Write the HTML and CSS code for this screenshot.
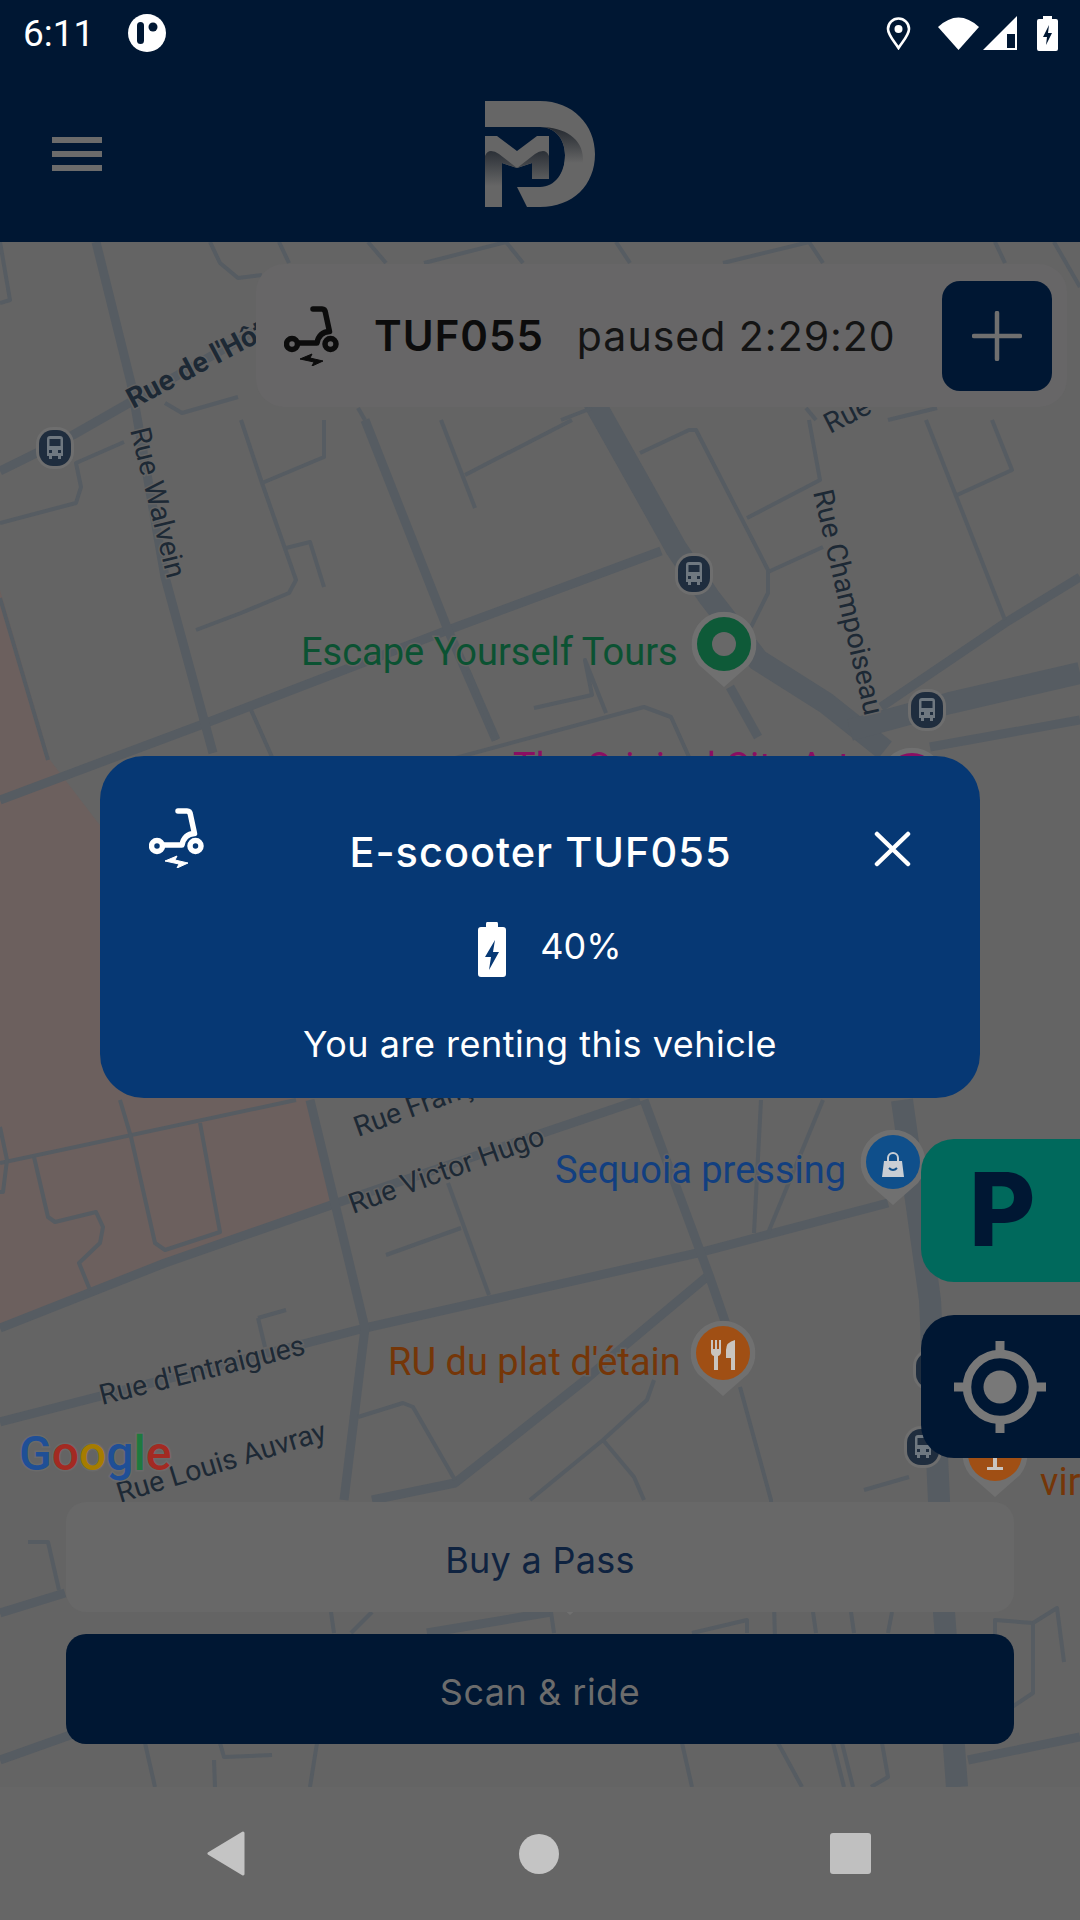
FILE: index.html

```html
<!DOCTYPE html>
<html lang="en">
<head>
  <meta charset="UTF-8" />
  <meta name="viewport" content="width=device-width, initial-scale=1.0"/>
  <title>E-scooter rental</title>
  <link rel="stylesheet" href="styles.css">
</head>
<body>
  <svg class="defs" width="0" height="0">
    <symbol id="scooter" viewBox="0 0 56 60">
      <path class="scooter-line" d="M29 3H38Q41 3 41.500 7L45.500 25.500Q35 26 33 37H14"/>
      <circle class="scooter-line" cx="8" cy="38" r="5.500"/>
      <circle class="scooter-line" cx="46.500" cy="38" r="5.500"/>
      <path class="scooter-bolt" d="M16 53L28 48L26 52L39 55L28 60L30 56Z"/>
    </symbol>
    <symbol id="bus-pin" viewBox="0 0 40 44">
      <rect x="1" y="1" width="38" height="42" rx="17" fill="#6e6e6e"/>
      <rect x="4" y="4" width="32" height="36" rx="14" fill="#1f2d3e"/>
      <path fill="#6f7880" d="M12 13q0-3 3-3h10q3 0 3 3v17h-2v3h-3v-3h-6v3h-3v-3h-2zM14.500 13v7h11v-7zM14 24v3h3v-3zM23 24v3h3v-3z"/>
    </symbol>
    <symbol id="pin-shell" viewBox="0 0 65 76">
      <path fill="#707070" d="M32.500 75.500L7.500 53.500A32.500 32.500 0 1 1 57.500 53.500Z"/>
    </symbol>
  </svg>

  <div class="screen">
    <div class="status-bar">
      <div class="status-left">
        <span class="clock">6:11</span>
        <svg class="app-dot" viewBox="0 0 38 38">
          <circle cx="19" cy="19" r="19" fill="#fff"/>
          <rect x="9" y="8" width="7" height="22" rx="3.500" fill="#001733"/>
          <circle cx="25" cy="13" r="4.500" fill="#001733"/>
        </svg>
      </div>
      <div class="status-right">
        <svg class="st-pin" viewBox="0 0 25 33">
          <path d="M12.500 31C8 24 2 18 2 12a10.500 10.500 0 0 1 21 0C23 18 17 24 12.500 31Z" fill="none" stroke="#fff" stroke-width="2.600"/>
          <circle cx="12.500" cy="12" r="4" fill="#fff"/>
        </svg>
        <svg class="st-wifi" viewBox="0 0 41 34">
          <path d="M0 11Q20.500-8 41 11L20.500 34Z" fill="#fff"/>
        </svg>
        <svg class="st-signal" viewBox="0 0 34 34">
          <path d="M0 34L34 0V34Z" fill="#fff"/>
          <path d="M24 18H32V32H24Z" fill="#001733"/>
        </svg>
        <svg class="st-battery" viewBox="0 0 21 35">
          <path fill="#fff" fill-rule="evenodd" d="M6 0h9v3h4q2 0 2 2v28q0 2-2 2H2q-2 0-2-2V5q0-2 2-2h4zM12 9l-6 12h4l-1 8 6-12h-4z"/>
        </svg>
      </div>
    </div>

    <header class="app-header">
      <button class="menu-btn"><span></span><span></span><span></span></button>
      <svg class="logo" viewBox="0 0 110 106">
        <defs>
          <linearGradient id="fold" x1="0" y1="0" x2="0" y2="1">
            <stop offset="0" stop-color="#23282f"/>
            <stop offset="0.6" stop-color="#666"/>
          </linearGradient>
          <linearGradient id="leg" x1="0" y1="0" x2="0" y2="1">
            <stop offset="0" stop-color="#2b3037"/>
            <stop offset="1" stop-color="#666"/>
          </linearGradient>
        </defs>
        <path fill="#666" d="M0 0H55C88 0 110 24 110 53C110 84 88 106 55 106H42L32 86H55C70 86 80 72 80 54C80 38 70 26 55 26H0Z"/>
        <path fill="url(#fold)" d="M55 26C80 26 98 38 98 58C98 72 84 86 62 86C74 82 80 70 80 54C80 38 70 26 55 26Z"/>
        <path fill="#666" d="M0 35H12L32 50L52 35H64V78H47V62L32 67L17 62V106H0Z"/>
        <path fill="url(#leg)" d="M0 55Q2 50 6 50Q10 50 14 53L32 67L50 53Q54 50 58 50Q62 50 64 55V78H47V62L32 67L17 62V85H0Z"/>
      </svg>
    </header>

    <main class="map">
      <svg class="map-canvas" viewBox="0 242 1080 1545">
        <path class="land-pink" d="M0 590L50 760L310 1100L337 1203L0 1328Z"/>

        <g class="road-wide">
          <path d="M590 395L676 548L709 597L758 660L826 703L885 750"/>
          <path d="M902 1100L930 1300L944 1612L957 1787"/>
          <path d="M1080 673L950 703L850 730"/>
        </g>
        <g class="road-mid">
          <path d="M0 471L73 435L257 330"/>
          <path d="M661 551L448 630L214 720L0 800"/>
          <path d="M96 242L131 383L165 577L213 753"/>
          <path d="M365 420L448 630L496 740"/>
          <path d="M730 687L758 737"/>
          <path d="M1080 577L1005 623L881 707"/>
          <path d="M1080 720L930 747"/>
          <path d="M0 1328L165 1263L337 1203L640 1100"/>
          <path d="M0 1422L365 1328L702 1252L888 1203"/>
          <path d="M310 1100L365 1328L344 1500"/>
          <path d="M0 1613L65 1593"/>
          <path d="M0 1760L76 1733"/>
          <path d="M427 1633L551 1612"/>
          <path d="M968 1760L1080 1737"/>
          <path d="M709 1275L623 1347L585 1380L455 1483L372 1500"/>
          <path d="M644 1100L709 1275L727 1327"/>
        </g>
        <g class="road-thin">
          <path d="M0 242L10 300L0 303"/>
          <path d="M210 242L220 263L238 278L262 275"/>
          <path d="M279 242L289 263"/>
          <path d="M368 242L386 263"/>
          <path d="M424 263L506 242L523 263"/>
          <path d="M616 242L630 263"/>
          <path d="M723 263L809 242L823 263"/>
          <path d="M995 242L1005 263"/>
          <path d="M1054 242L1080 287"/>
          <path d="M165 403L182 413L238 397"/>
          <path d="M561 420L592 408"/>
          <path d="M358 408L365 420"/>
          <path d="M806 408L816 420"/>
          <path d="M888 420L937 408"/>
          <path d="M241 420L262 483L296 580L289 593L241 613L196 630"/>
          <path d="M262 483L324 457L324 420"/>
          <path d="M286 548L310 542L324 587"/>
          <path d="M441 420L475 508"/>
          <path d="M572 420L465 475"/>
          <path d="M640 453L689 430L696 430L768 570L768 593L751 627"/>
          <path d="M747 518L820 480L809 420"/>
          <path d="M768 572L823 547"/>
          <path d="M926 420L1005 620"/>
          <path d="M957 495L1012 470L992 420"/>
          <path d="M0 523L76 503L81 487L76 463L124 442"/>
          <path d="M0 598L48 760"/>
          <path d="M251 710L272 757"/>
          <path d="M534 708L592 695L585 660L606 713"/>
          <path d="M448 760L644 707L671 717L689 757"/>
          <path d="M468 670L496 740"/>
          <path d="M0 1163L296 1100"/>
          <path d="M120 1100L131 1137L155 1243L165 1250L220 1232L200 1123"/>
          <path d="M34 1157L48 1217L55 1222L96 1212L103 1227L100 1243L79 1263L90 1290"/>
          <path d="M0 1127L7 1160L3 1192L0 1192"/>
          <path d="M448 1183L489 1295"/>
          <path d="M461 1228L386 1255"/>
          <path d="M761 1100L754 1233"/>
          <path d="M823 1100L768 1233"/>
          <path d="M740 1387L771 1500L778 1743L802 1787"/>
          <path d="M654 1380L647 1400L603 1440L530 1500"/>
          <path d="M603 1440L634 1477L644 1500"/>
          <path d="M358 1417L403 1403L413 1407L455 1480"/>
          <path d="M258 1318L286 1310"/>
          <path d="M258 1318L265 1347"/>
          <path d="M28 1542L48 1542L59 1590"/>
          <path d="M145 1743L155 1787"/>
          <path d="M220 1743L224 1757L272 1755"/>
          <path d="M214 1760L215 1787"/>
          <path d="M317 1743L310 1787"/>
          <path d="M331 1612L334 1633"/>
          <path d="M372 1612L351 1633"/>
          <path d="M551 1612L554 1633"/>
          <path d="M692 1633L747 1620L747 1633"/>
          <path d="M682 1743L692 1787"/>
          <path d="M833 1743L844 1787"/>
          <path d="M842 1743L853 1787"/>
          <path d="M882 1743L888 1777L871 1787"/>
          <path d="M813 1612L816 1633"/>
          <path d="M851 1612L854 1633"/>
          <path d="M892 1612L888 1633"/>
          <path d="M1012 1707L1033 1693L1033 1623L995 1620L995 1700"/>
          <path d="M1033 1623L1057 1608L1064 1662"/>
          <path d="M864 1490L909 1477"/>
        </g>

        <text class="street street-bold" transform="translate(133 409) rotate(-28)">Rue de l'Hôtel</text>
        <text class="street" transform="translate(130 430) rotate(76)">Rue Walvein</text>
        <text class="street" transform="translate(813 492) rotate(77)">Rue Champoiseau</text>
        <text class="street" transform="translate(830 434) rotate(-27)">Rue</text>
        <text class="street" transform="translate(358 1137) rotate(-20)">Rue François</text>
        <text class="street" transform="translate(353 1214) rotate(-20)">Rue Victor Hugo</text>
        <text class="street" transform="translate(102 1405) rotate(-14)">Rue d'Entraigues</text>
        <text class="street" transform="translate(120 1503) rotate(-17)">Rue Louis Auvray</text>

        <text class="google" x="19" y="1470"><tspan class="g-blue">G</tspan><tspan class="g-red">o</tspan><tspan class="g-yellow">o</tspan><tspan class="g-blue">g</tspan><tspan class="g-green">l</tspan><tspan class="g-red">e</tspan></text>

        <text class="poi poi-green" x="301" y="665">Escape Yourself Tours</text>
        <text class="poi poi-magenta" x="513" y="780">The Original City Art</text>
        <text class="poi poi-blue" x="555" y="1183">Sequoia pressing</text>
        <text class="poi poi-orange" x="388" y="1375">RU du plat d'étain</text>
        <text class="poi poi-orange" x="1040" y="1495">vir</text>

        <use href="#bus-pin" x="35" y="426" width="40" height="44"/>
        <use href="#bus-pin" x="674" y="552" width="40" height="44"/>
        <use href="#bus-pin" x="907" y="688" width="40" height="44"/>
        <use href="#bus-pin" x="903" y="1425" width="40" height="44"/>
        <use href="#bus-pin" x="912" y="1348" width="40" height="44"/>

        <use href="#pin-shell" x="691.500" y="611.500" width="65" height="76"/>
        <circle cx="724" cy="644" r="27" fill="#0e5a38"/>
        <circle cx="724" cy="644" r="12" fill="#686868"/>

        <use href="#pin-shell" x="879.500" y="747.500" width="65" height="76"/>
        <circle cx="912" cy="780" r="27" fill="#8a0e63"/>

        <use href="#pin-shell" x="860.500" y="1129.500" width="65" height="76"/>
        <circle cx="893" cy="1162" r="27" fill="#0f4f8b"/>
        <path fill="#c9ced4" fill-rule="evenodd" d="M882 1177l2-16h3v-3a6 6 0 0 1 12 0v3h3l2 16zM889 1161h8v-3a4 4 0 0 0-8 0z"/>
        <path fill="none" stroke="#0f4f8b" stroke-width="2" d="M889 1168q4 4 8 0"/>

        <use href="#pin-shell" x="690.500" y="1320.500" width="65" height="76"/>
        <circle cx="723" cy="1353" r="27" fill="#a04f14"/>
        <path fill="#c9c4bf" d="M711 1340h2v9h2v-9h2v9h2v-9h2v12q0 3-3 4v14h-4v-14q-3-1-3-4zM735 1340v30h-4v-12h-5v-8q0-8 9-10z"/>

        <use href="#pin-shell" x="962.500" y="1421.500" width="65" height="76"/>
        <circle cx="995" cy="1454" r="27" fill="#a04f14"/>
        <path fill="#c9c4bf" d="M987 1467h16v3h-16zM993 1456h4v11h-4z"/>

        <use href="#pin-shell" x="537.500" y="1539.500" width="65" height="76"/>
      </svg>

      <div class="ride-card">
        <svg class="ride-icon"><use href="#scooter"/></svg>
        <span class="ride-code">TUF055</span>
        <span class="ride-state">paused 2:29:20</span>
        <button class="extend-btn">
          <svg viewBox="0 0 50 50" width="50" height="50">
            <path d="M25 2V48M2 25H48" stroke="#6f6f6f" stroke-width="4.500" stroke-linecap="round"/>
          </svg>
        </button>
      </div>

      <div class="side-btn side-parking">P</div>
      <div class="side-btn side-locate">
        <svg viewBox="0 0 92 92" width="92" height="92">
          <circle cx="46" cy="46" r="33" fill="none" stroke="#787878" stroke-width="8.500"/>
          <circle cx="46" cy="46" r="16.500" fill="#787878"/>
          <path d="M46 0V12M46 80V92M0 46H12M80 46H92" stroke="#787878" stroke-width="9"/>
        </svg>
      </div>

      <div class="map-actions">
        <button class="action action-light">Buy a Pass</button>
        <button class="action action-dark">Scan &amp; ride</button>
      </div>

      <div class="vehicle-dialog">
        <div class="dialog-head">
          <svg class="dialog-scooter"><use href="#scooter"/></svg>
          <h2>E-scooter TUF055</h2>
          <svg class="dialog-close" viewBox="0 0 37 36">
            <path d="M3 3L34 33M34 3L3 33" stroke="#fff" stroke-width="4.500" stroke-linecap="round"/>
          </svg>
        </div>
        <div class="dialog-battery">
          <svg viewBox="0 0 28 55" width="28" height="55">
            <path fill="#fff" fill-rule="evenodd" d="M9 0h10q1 0 1 2v3h5q3 0 3 3v44q0 3-3 3H3q-3 0-3-3V8q0-3 3-3h5V2q0-2 1-2zM17 18L7 35h6l-2 13 10-18h-6z"/>
          </svg>
          <span>40%</span>
        </div>
        <p>You are renting this vehicle</p>
      </div>
    </main>

    <nav class="nav-bar">
      <svg viewBox="0 0 38 45" width="38" height="45">
        <path d="M36 2L2 22.500L36 43Z" fill="#c4c4c4" stroke="#c4c4c4" stroke-width="3" stroke-linejoin="round"/>
      </svg>
      <span class="nav-home"></span>
      <span class="nav-recent"></span>
    </nav>
  </div>
</body>
</html>
```

FILE: styles.css

```css
* {
  box-sizing: border-box;
}
body {
  margin: 0;
  font-family: Inter, "Liberation Sans", sans-serif;
  background-color: #646464;
}
button {
  font-family: inherit;
  border: 0;
  padding: 0;
}
.defs {
  position: absolute;
}
.screen {
  width: 1080px;
  height: 1920px;
  display: flex;
  flex-direction: column;
  overflow: hidden;
}

/* status bar */
.status-bar {
  height: 66px;
  flex: none;
  padding: 0 22px 0 23px;
  display: flex;
  justify-content: space-between;
  align-items: center;
  background-color: #001733;
}
.status-left {
  display: flex;
  align-items: center;
  gap: 36px;
}
.clock {
  font-family: Roboto, sans-serif;
  font-size: 37px;
  color: #fff;
  width: 69px;
}
.app-dot {
  width: 38px;
  height: 38px;
}
.status-right {
  display: flex;
  align-items: center;
}
.st-pin {
  width: 25px;
  height: 33px;
  margin-right: 27px;
}
.st-wifi {
  width: 41px;
  height: 34px;
  margin-right: 4px;
}
.st-signal {
  width: 34px;
  height: 34px;
  margin-right: 20px;
}
.st-battery {
  width: 21px;
  height: 35px;
}

/* header */
.app-header {
  height: 176px;
  flex: none;
  position: relative;
  display: flex;
  align-items: center;
  justify-content: center;
  background-color: #001733;
}
.menu-btn {
  position: absolute;
  left: 52px;
  top: 71px;
  width: 50px;
  background: none;
  display: flex;
  flex-direction: column;
  gap: 8px;
}
.menu-btn span {
  height: 6px;
  background-color: #6b6b6b;
}
.logo {
  width: 110px;
  height: 106px;
}

/* map */
.map {
  flex: 1;
  position: relative;
  overflow: hidden;
  background-color: #646464;
}
.map-canvas {
  position: absolute;
  inset: 0;
  width: 100%;
  height: 100%;
}
.land-pink {
  fill: #6c605e;
}
.road-wide path, .road-mid path, .road-thin path {
  fill: none;
  stroke: #565c62;
  stroke-linejoin: round;
}
.road-wide path {
  stroke-width: 22px;
}
.road-mid path {
  stroke-width: 9px;
}
.road-thin path {
  stroke-width: 4px;
}
.street {
  font-family: Roboto, sans-serif;
  font-size: 28.500px;
  fill: #1d2935;
  paint-order: stroke;
  stroke: #646464;
  stroke-width: 3px;
}
.street-bold {
  font-weight: 700;
}
.google {
  font-family: Roboto, sans-serif;
  font-size: 48px;
  font-weight: 500;
  paint-order: stroke;
  stroke: #6a6a6a;
  stroke-width: 3px;
}
.g-blue { fill: #1f4f96; }
.g-red { fill: #a32a22; }
.g-yellow { fill: #a67c00; }
.g-green { fill: #1e7a3e; }
.poi {
  font-family: Roboto, sans-serif;
  font-size: 38px;
  paint-order: stroke;
  stroke: #646464;
  stroke-width: 3px;
}
.poi-green { fill: #0b5232; }
.poi-magenta { fill: #8a0e63; }
.poi-blue { fill: #123f80; }
.poi-orange { fill: #753608; }

/* active ride */
.ride-card {
  position: absolute;
  top: 22px;
  left: 256px;
  right: 13px;
  height: 143px;
  padding: 0 15px 0 28px;
  display: flex;
  align-items: center;
  border-radius: 28px;
  background-color: #676667;
}
.ride-icon {
  width: 56px;
  height: 60px;
  margin-right: 34px;
  color: #0c0c0c;
}
.scooter-line {
  fill: none;
  stroke: currentColor;
  stroke-width: 5.500px;
  stroke-linecap: round;
  stroke-linejoin: round;
}
.scooter-bolt {
  fill: currentColor;
  stroke: currentColor;
  stroke-width: 1px;
  stroke-linejoin: round;
}
.ride-code {
  font-size: 42px;
  font-weight: 600;
  letter-spacing: 1px;
  color: #0c0c0c;
  margin-right: 33px;
}
.ride-state {
  font-size: 41px;
  letter-spacing: 1px;
  color: #141414;
}
.extend-btn {
  margin-left: auto;
  width: 110px;
  height: 110px;
  display: flex;
  align-items: center;
  justify-content: center;
  border-radius: 18px;
  background-color: #001733;
}

/* side buttons */
.side-btn {
  position: absolute;
  left: 921px;
  width: 190px;
  height: 143px;
  display: flex;
  align-items: center;
  border-radius: 33px;
}
.side-parking {
  top: 897px;
  padding-left: 48px;
  padding-bottom: 4px;
  background-color: #00695c;
  color: #001733;
  font-size: 102px;
  font-weight: 800;
}
.side-locate {
  top: 1073px;
  padding-left: 33px;
  background-color: #001733;
}

/* bottom buttons */
.map-actions {
  position: absolute;
  left: 66px;
  right: 66px;
  bottom: 43px;
  display: flex;
  flex-direction: column;
  gap: 22px;
}
.action {
  height: 110px;
  padding-top: 5px;
  border-radius: 20px;
  font-size: 36px;
  letter-spacing: 0.300px;
}
.action-light {
  background-color: #686868;
  color: #0f2340;
}
.action-dark {
  background-color: #001733;
  color: #6c6c6c;
  letter-spacing: 0.500px;
}

/* dialog */
.vehicle-dialog {
  position: absolute;
  top: 514px;
  left: 100px;
  width: 880px;
  height: 342px;
  padding: 64px 49px 0 49px;
  border-radius: 44px;
  background-color: #063874;
  color: #fff;
  text-align: center;
}
.dialog-head {
  height: 64px;
  display: flex;
  align-items: center;
  justify-content: space-between;
}
.dialog-scooter {
  width: 56px;
  height: 60px;
  color: #fff;
  position: relative;
  top: -14px;
}
.dialog-head h2 {
  margin: 0;
  font-size: 41.500px;
  font-weight: 500;
  letter-spacing: 1px;
  position: relative;
  left: 1px;
}
.dialog-close {
  width: 37px;
  height: 36px;
  margin-right: 20px;
  position: relative;
  top: -3px;
}
.dialog-battery {
  margin-top: 38px;
  padding-left: 20px;
  display: flex;
  align-items: center;
  justify-content: center;
  gap: 34px;
  font-size: 36px;
}
.dialog-battery span {
  margin-bottom: 8px;
}
.vehicle-dialog p {
  margin: 45px 0 0;
  font-size: 36px;
  letter-spacing: 0.500px;
}

/* navigation */
.nav-bar {
  height: 133px;
  flex: none;
  padding: 0 209px 0 207px;
  display: flex;
  align-items: center;
  justify-content: space-between;
  background-color: #666;
}
.nav-home {
  width: 40px;
  height: 40px;
  margin-left: 2px;
  border-radius: 50%;
  background-color: #c4c4c4;
}
.nav-recent {
  width: 41px;
  height: 41px;
  border-radius: 3px;
  background-color: #c0c0c0;
}
```
